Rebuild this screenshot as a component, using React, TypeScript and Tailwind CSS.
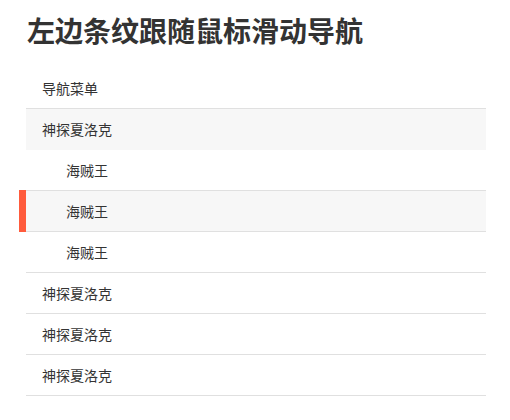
import { useLayoutEffect, useRef, useState } from 'react';

interface NavItem {
  label: string;
  sub?: boolean;
  head?: boolean;
}

const items: NavItem[] = [
  { label: '导航菜单' },
  { label: '神探夏洛克', head: true },
  { label: '海贼王', sub: true },
  { label: '海贼王', sub: true },
  { label: '海贼王', sub: true },
  { label: '神探夏洛克' },
  { label: '神探夏洛克' },
  { label: '神探夏洛克' },
];

export default function App() {
  const [active, setActive] = useState(3);
  const [bar, setBar] = useState({ top: 122, height: 41 });
  const refs = useRef<(HTMLLIElement | null)[]>([]);

  useLayoutEffect(() => {
    const el = refs.current[active];
    if (el) setBar({ top: el.offsetTop - 1, height: el.offsetHeight + 1 });
  }, [active]);

  return (
    <div
      className="min-h-[420px] bg-white pl-[26px] pr-[24px] text-[#333]"
      style={{ fontFamily: '"Noto Sans CJK SC", "Noto Sans", sans-serif' }}
    >
      <h1 className="pt-[13px] pl-px text-[28px] font-bold leading-[34px] text-[#333]">
        左边条纹跟随鼠标滑动导航
      </h1>
      <ul className="relative mt-[21px]" onMouseLeave={() => setActive(3)}>
        <span
          className="absolute left-[-7px] w-[7px] bg-[#ff5b3c] transition-all duration-300"
          style={{ top: bar.top, height: bar.height }}
        />
        {items.map((item, i) => (
          <li
            key={i}
            ref={(el) => {
              refs.current[i] = el;
            }}
            onMouseEnter={() => setActive(i)}
            className={`flex cursor-pointer items-center text-[14px] ${
              item.head ? 'h-[41px]' : 'h-[41px] border-b border-[#e0e0e0]'
            } ${item.sub ? 'pl-10' : 'pl-4'} ${
              item.head || i === active ? 'bg-[#f7f7f7]' : 'bg-white'
            }`}
          >
            {item.label}
          </li>
        ))}
      </ul>
    </div>
  );
}
